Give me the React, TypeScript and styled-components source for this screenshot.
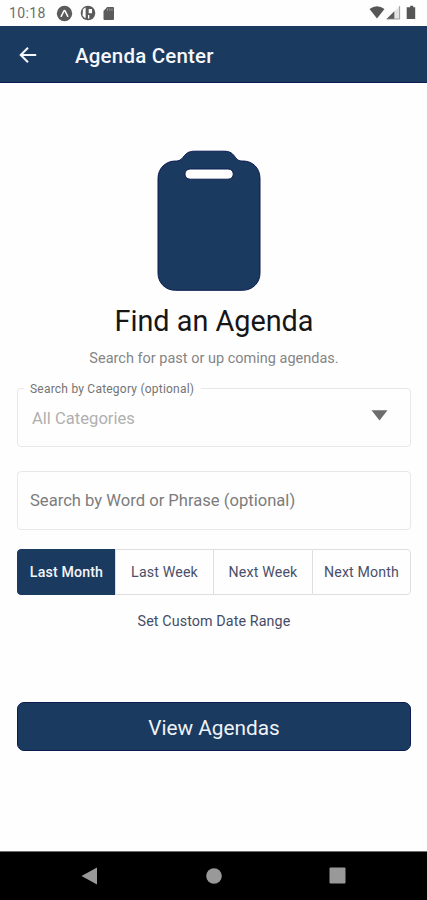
import React, { useState } from "react";
import styled, { createGlobalStyle } from "styled-components";

const navy = "#1a3a5f";
const navyEdge = "#0c1c50";

const GlobalStyle = createGlobalStyle`
  * { box-sizing: border-box; }
  html, body { margin: 0; padding: 0; background: #fefefe; }
  body { font-family: Roboto, "Liberation Sans", sans-serif; }
  button { font-family: inherit; margin: 0; padding: 0; cursor: pointer; }
  svg { display: block; flex: none; }
`;

const Screen = styled.div`
  width: 427px;
  height: 900px;
  display: flex;
  flex-direction: column;
  background: #fefefe;
  overflow: hidden;
  white-space: nowrap;
`;

const StatusBar = styled.header`
  height: 26px;
  flex: none;
  display: flex;
  align-items: center;
  padding: 0 6px 0 9px;
  color: #6c6c6c;
`;

const Clock = styled.span`
  width: 47px;
  font-size: 14px;
  letter-spacing: 0.35px;
`;

const Notifications = styled.div`
  display: flex;
  align-items: center;
  gap: 7px;
  flex: 1;
`;

const SystemIcons = styled.div`
  display: flex;
  align-items: center;
`;

const AppBar = styled.nav`
  height: 57px;
  flex: none;
  display: flex;
  align-items: center;
  padding-left: 18px;
  background: ${navy};
  border-bottom: 1px solid ${navyEdge};
  color: #f6f7fb;
`;

const BackButton = styled.button`
  border: 0;
  background: none;
  color: inherit;
  width: 57px;
  display: flex;
  padding-top: 1px;
`;

const Title = styled.h1`
  margin: 3px 0 0;
  font-size: 20.5px;
  font-weight: 500;
  letter-spacing: 0.2px;
`;

const Content = styled.main`
  flex: 1;
  display: flex;
  flex-direction: column;
  align-items: center;
  padding: 67px 16px 0 17px;
`;

const Clipboard = styled.svg`
  margin-right: 10px;
`;

const Heading = styled.h2`
  margin: 10px 0 0;
  font-size: 28.8px;
  line-height: 38px;
  font-weight: 400;
  color: #161616;
`;

const Subtitle = styled.p`
  margin: 9px 0 0;
  font-size: 14.5px;
  line-height: 20px;
  color: #858585;
`;

const SelectField = styled.fieldset`
  width: 394px;
  height: 67px;
  margin: 11px 0 0;
  padding: 0 22px 0 14px;
  border: 1px solid #e8e8e8;
  border-radius: 4px;
  display: flex;
  justify-content: space-between;
`;

const FieldLabel = styled.legend`
  margin-left: -8px;
  padding: 2px 7px 0 6px;
  font-size: 12px;
  line-height: 14px;
  letter-spacing: 0.22px;
  color: #747474;
`;

const SelectValue = styled.span`
  margin-top: 12px;
  font-size: 16.6px;
  line-height: 22px;
  color: #b0b0b0;
`;

const Caret = styled.svg`
  margin-top: 14px;
`;

const SearchInput = styled.input`
  width: 394px;
  height: 59px;
  margin-top: 24px;
  padding: 0 12px;
  border: 1px solid #e8e8e8;
  border-radius: 4px;
  background: transparent;
  outline: none;
  font-family: inherit;
  font-size: 16.6px;
  color: #222;
  &::placeholder { color: #7c7c7c; opacity: 1; }
`;

const Segments = styled.div`
  width: 394px;
  height: 46px;
  margin-top: 19px;
  display: grid;
  grid-template-columns: 98px 98px 99px 99px;
  border-radius: 4px;
  overflow: hidden;
`;

const Segment = styled.button<{ $active: boolean }>`
  border: 1px solid ${(p) => (p.$active ? navy : "#dedee2")};
  border-right-width: 0;
  &:last-child {
    border-right-width: 1px;
    border-radius: 0 4px 4px 0;
  }
  &:first-child { border-radius: 4px 0 0 4px; }
  background: ${(p) => (p.$active ? navy : "transparent")};
  color: ${(p) => (p.$active ? "#f4f5fa" : "#4a5068")};
  font-size: 14.2px;
  font-weight: ${(p) => (p.$active ? 500 : 400)};
  letter-spacing: 0.15px;
`;

const RangeLink = styled.button`
  border: 0;
  background: none;
  margin-top: 16px;
  font-size: 14.3px;
  line-height: 20px;
  letter-spacing: 0.1px;
  color: #454c66;
`;

const SubmitButton = styled.button`
  width: 394px;
  height: 49px;
  margin-top: 71px;
  padding-top: 2px;
  border: 1px solid ${navyEdge};
  border-radius: 7px;
  background: ${navy};
  color: #f0f2f7;
  font-size: 20.8px;
`;

const NavBar = styled.footer`
  height: 49px;
  flex: none;
  display: grid;
  grid-template-columns: 179px 69px 178px;
  align-items: center;
  justify-items: center;
  padding-bottom: 1px;
  background: #000;
  border-top: 1px solid #6f6f6f;
`;

const NavKey = styled.button`
  border: 0;
  background: none;
`;

const ranges = ["Last Month", "Last Week", "Next Week", "Next Month"];

export default function App() {
  const [range, setRange] = useState(ranges[0]);
  return (
    <>
      <GlobalStyle />
      <Screen>
        <StatusBar>
          <Clock>10:18</Clock>
          <Notifications>
            <svg width="17" height="17" viewBox="0 0 17 17">
              <circle cx="8.5" cy="8.5" r="7.7" fill="#5b5b5b" />
              <path d="M5.2 11.3 7.7 6.4Q8.5 4.8 9.3 6.4L11.8 11.3" fill="none" stroke="#fff" strokeWidth="1.5" strokeLinecap="round" strokeLinejoin="round" />
            </svg>
            <svg width="16" height="16" viewBox="0 0 16 16">
              <circle cx="8" cy="8" r="7.3" fill="#5b5b5b" />
              <path d="M3 4.6Q4 3 5.6 2.6V13.2Q3.6 12.6 2.6 10.6Z" fill="#fff" />
              <path d="M8.7 4H12V8.3H8.7ZM8 10H9.3V13.6H8Z" fill="#fff" />
            </svg>
            <svg width="12" height="15" viewBox="0 0 12 15">
              <path d="M4.2 1H10Q11 1 11 2V13Q11 14 10 14H1.5Q.5 14 .5 13V5Z" fill="#5b5b5b" />
              <path d="M4.5 2.3V5M6.8 2.3V5M9 2.3V5" stroke="#8c8c8c" strokeWidth="1.1" />
            </svg>
          </Notifications>
          <SystemIcons>
            <svg width="52" height="16" viewBox="0 0 52 16">
              <path d="M.5 4Q8 -1.5 15.5 4L8 13.5Z" fill="#565656" />
              <path d="M17.6 14 30.6 1V14Z" fill="#e4e4e4" />
              <path d="M17.6 14 25.3 6.3V14Z" fill="#5c5c5c" />
              <path d="M17.6 14H30.6V1" fill="none" stroke="#8c8c8c" strokeWidth=".8" />
              <path d="M39.2 2.2H41.2V.7H44.2V2.2H46.2V14H37.7V2.2Z" fill="#565656" />
            </svg>
          </SystemIcons>
        </StatusBar>
        <AppBar>
          <BackButton aria-label="Back">
            <svg width="20" height="20" viewBox="0 0 20 20">
              <path d="M18.2 10H3M10 2.7 2.7 10 10 17.3" fill="none" stroke="#f6f7fb" strokeWidth="2" />
            </svg>
          </BackButton>
          <Title>Agenda Center</Title>
        </AppBar>
        <Content>
          <Clipboard width="104" height="142" viewBox="0 0 104 142">
            <path
              fillRule="evenodd"
              fill={navy}
              stroke={navyEdge}
              strokeWidth="1"
              d="M18.5 11H19.5C23.5 11 25 8.5 27.5 5.5C30.5 2 33.5 1.2 38 1.2H67C72 1.2 74.5 2.5 77 5.5C79.5 8.7 80.5 11 84.5 11H86C96 11 103 18.5 103 28.5V123C103 133 95.5 140.3 85.5 140.3H18.5C8.5 140.3 1 133 1 123V28.5C1 18.5 8.5 11 18.5 11ZM33.3 19C26.2 19 26.2 29.2 33.3 29.2H71C78 29.2 78 19 71 19Z"
            />
          </Clipboard>
          <Heading>Find an Agenda</Heading>
          <Subtitle>Search for past or up coming agendas.</Subtitle>
          <SelectField>
            <FieldLabel>Search by Category (optional)</FieldLabel>
            <SelectValue>All Categories</SelectValue>
            <Caret width="17" height="11" viewBox="0 0 17 11">
              <path d="M.5 .2H16.5L8.5 10.5Z" fill="#6d6d6d" />
            </Caret>
          </SelectField>
          <SearchInput placeholder="Search by Word or Phrase (optional)" />
          <Segments>
            {ranges.map((r) => (
              <Segment key={r} $active={r === range} onClick={() => setRange(r)}>
                {r}
              </Segment>
            ))}
          </Segments>
          <RangeLink>Set Custom Date Range</RangeLink>
          <SubmitButton>View Agendas</SubmitButton>
        </Content>
        <NavBar>
          <NavKey aria-label="Back">
            <svg width="17" height="18" viewBox="0 0 17 18">
              <path d="M.5 9 16 .5V17.5Z" fill="#999" />
            </svg>
          </NavKey>
          <NavKey aria-label="Home">
            <svg width="16" height="16" viewBox="0 0 16 16">
              <circle cx="8" cy="8" r="7.8" fill="#999" />
            </svg>
          </NavKey>
          <NavKey aria-label="Recent apps">
            <svg width="17" height="17" viewBox="0 0 17 17">
              <rect x=".5" y=".5" width="16" height="16" rx="1" fill="#999" />
            </svg>
          </NavKey>
        </NavBar>
      </Screen>
    </>
  );
}
